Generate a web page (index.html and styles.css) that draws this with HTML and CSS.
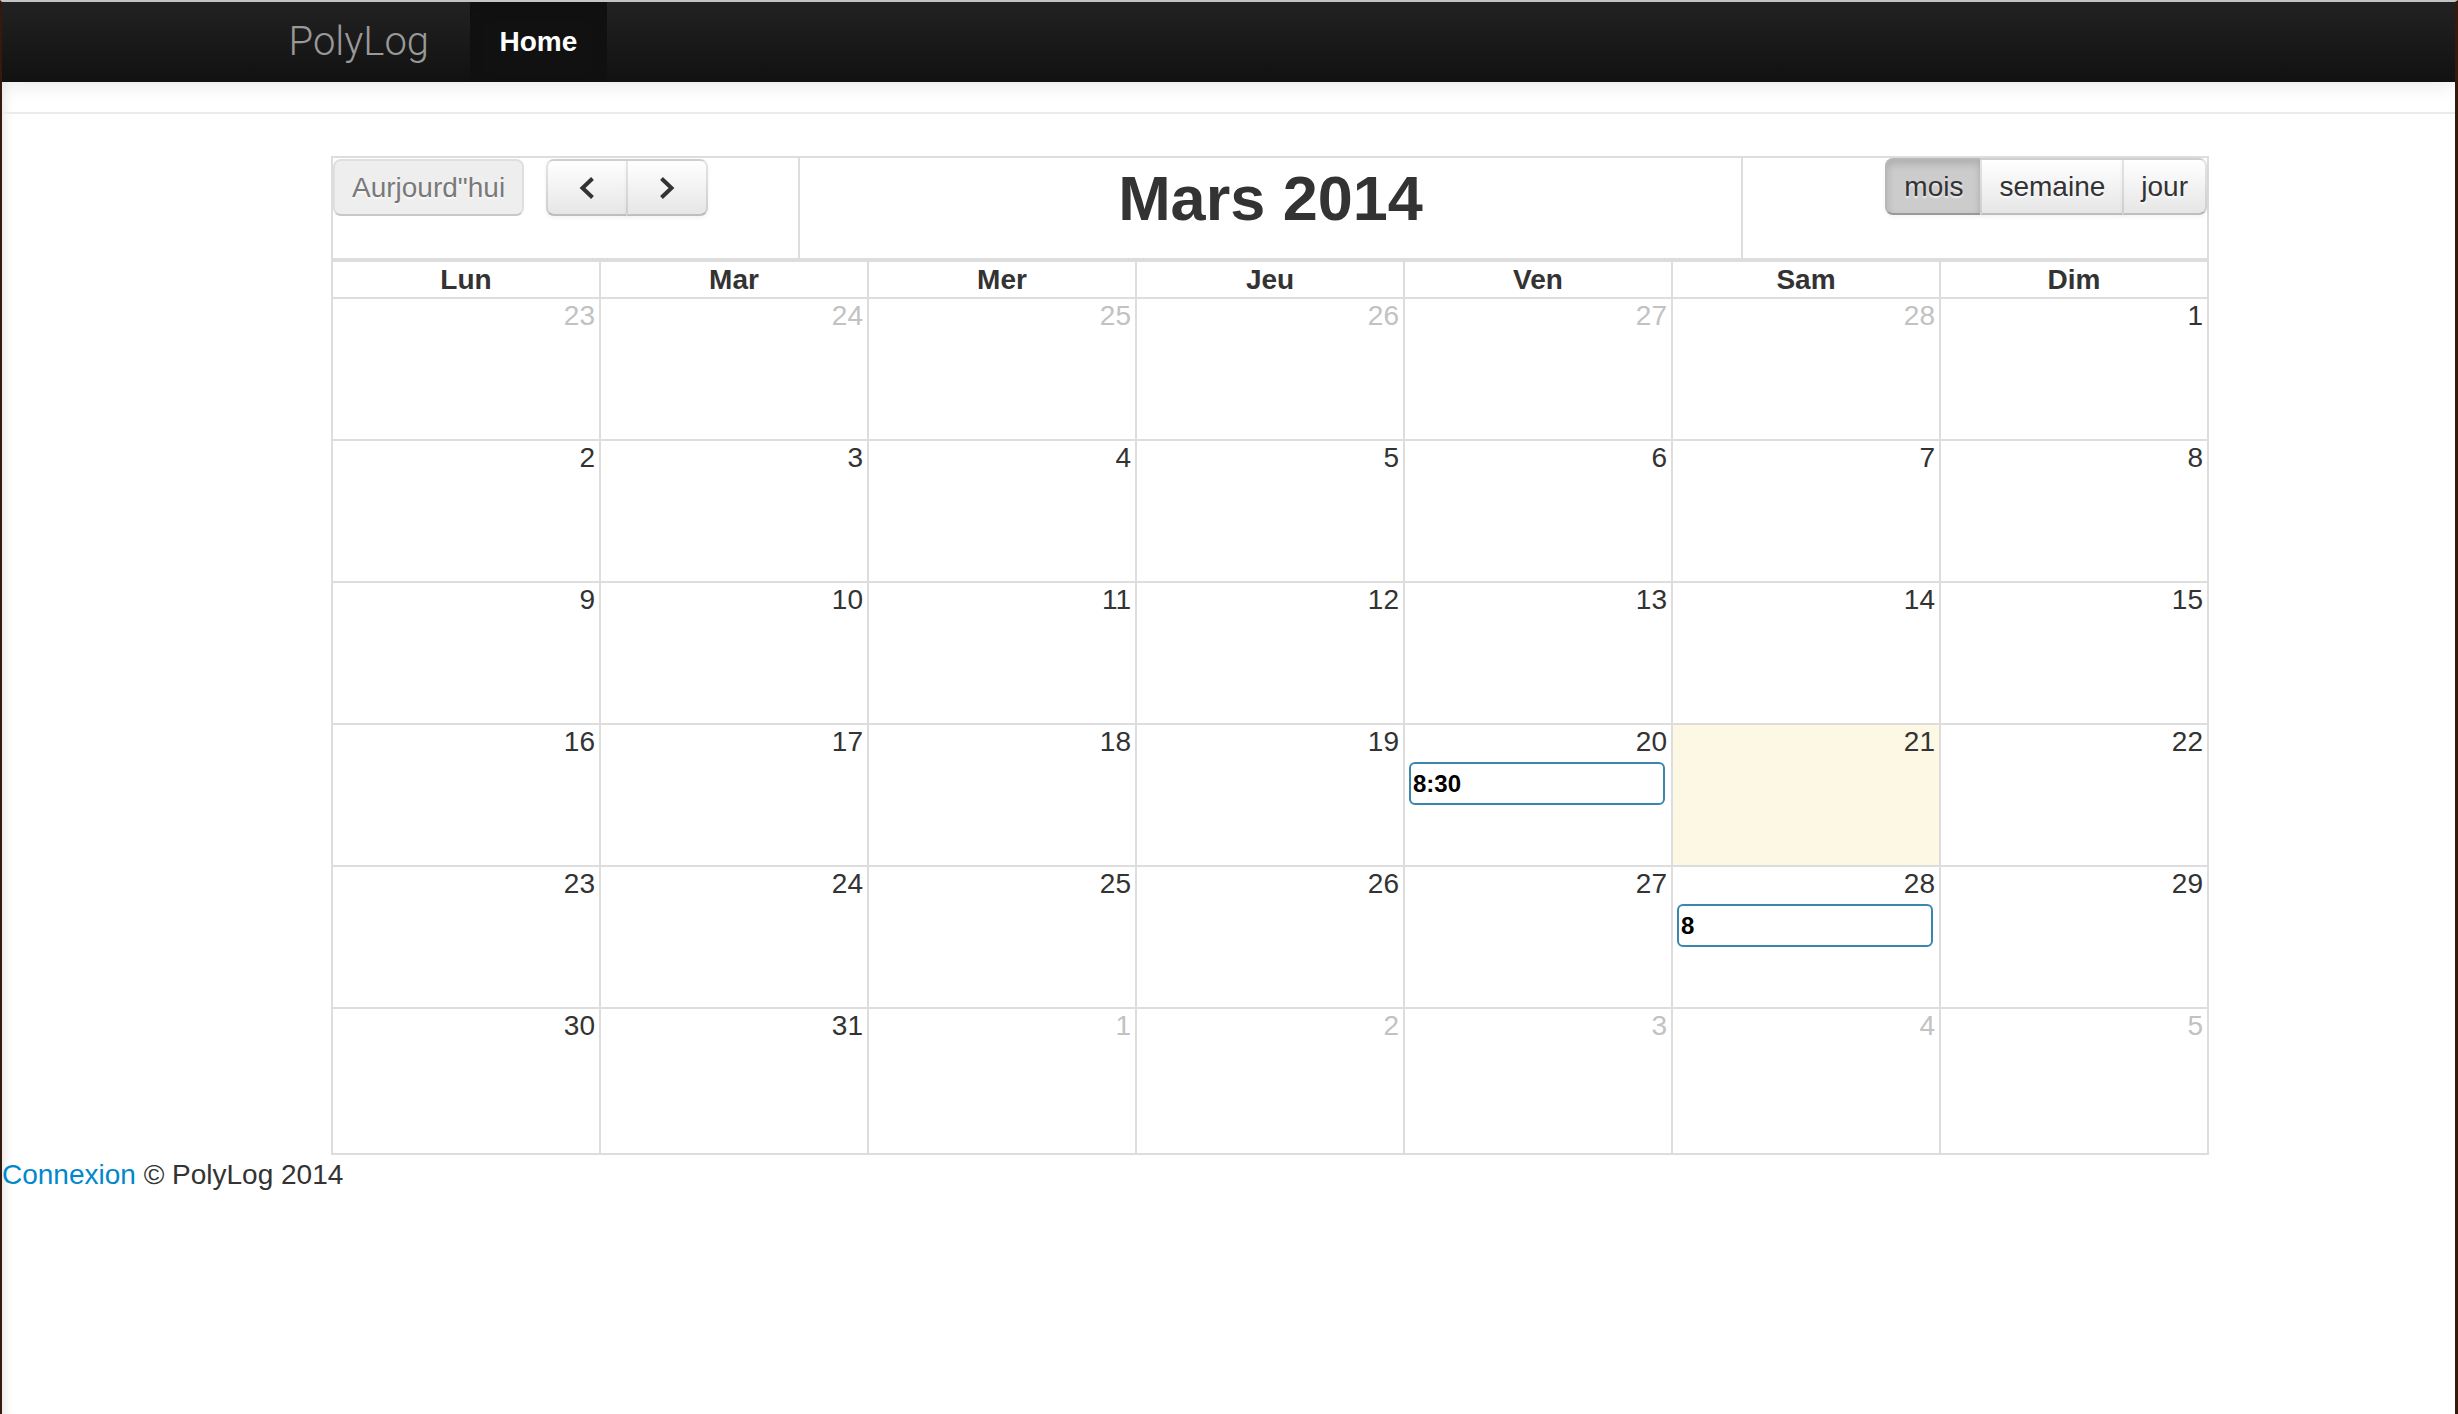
FILE: index.html
```html
<!DOCTYPE html>
<html lang="fr">
<head>
<meta charset="utf-8">
<title>PolyLog</title>
<link rel="stylesheet" href="styles.css">
</head>
<body>
<div class="window">
  <header class="navbar">
    <div class="nav-container">
      <a class="brand" href="#">PolyLog</a>
      <ul class="nav">
        <li class="active"><a href="#">Home</a></li>
      </ul>
    </div>
  </header>
  <div class="sep"></div>
  <main class="page">
    <div class="calendar">
      <div class="fc-header">
        <div class="fc-header-left">
          <span class="fc-button fc-state-disabled fc-corner-left fc-corner-right">Aurjourd"hui</span>
          <span class="fc-button fc-prev fc-corner-left"><svg class="chev" width="18" height="22" viewBox="0 0 18 22"><polyline points="14.5,1.5 4.5,11 14.5,20.5" fill="none" stroke="#333" stroke-width="4"/></svg></span><span class="fc-button fc-corner-right"><svg class="chev" width="18" height="22" viewBox="0 0 18 22"><polyline points="3.5,1.5 13.5,11 3.5,20.5" fill="none" stroke="#333" stroke-width="4"/></svg></span>
        </div>
        <div class="fc-header-center"><h2>Mars 2014</h2></div>
        <div class="fc-header-right">
          <span class="fc-button fc-state-active fc-corner-left">mois</span><span class="fc-button">semaine</span><span class="fc-button fc-corner-right">jour</span>
        </div>
      </div>
      <div class="fc-grid">
        <div class="fc-th">Lun</div>
        <div class="fc-th">Mar</div>
        <div class="fc-th">Mer</div>
        <div class="fc-th">Jeu</div>
        <div class="fc-th">Ven</div>
        <div class="fc-th">Sam</div>
        <div class="fc-th">Dim</div>

        <div class="fc-day fc-other"><div class="num">23</div></div>
        <div class="fc-day fc-other"><div class="num">24</div></div>
        <div class="fc-day fc-other"><div class="num">25</div></div>
        <div class="fc-day fc-other"><div class="num">26</div></div>
        <div class="fc-day fc-other"><div class="num">27</div></div>
        <div class="fc-day fc-other"><div class="num">28</div></div>
        <div class="fc-day"><div class="num">1</div></div>

        <div class="fc-day"><div class="num">2</div></div>
        <div class="fc-day"><div class="num">3</div></div>
        <div class="fc-day"><div class="num">4</div></div>
        <div class="fc-day"><div class="num">5</div></div>
        <div class="fc-day"><div class="num">6</div></div>
        <div class="fc-day"><div class="num">7</div></div>
        <div class="fc-day"><div class="num">8</div></div>

        <div class="fc-day"><div class="num">9</div></div>
        <div class="fc-day"><div class="num">10</div></div>
        <div class="fc-day"><div class="num">11</div></div>
        <div class="fc-day"><div class="num">12</div></div>
        <div class="fc-day"><div class="num">13</div></div>
        <div class="fc-day"><div class="num">14</div></div>
        <div class="fc-day"><div class="num">15</div></div>

        <div class="fc-day"><div class="num">16</div></div>
        <div class="fc-day"><div class="num">17</div></div>
        <div class="fc-day"><div class="num">18</div></div>
        <div class="fc-day"><div class="num">19</div></div>
        <div class="fc-day"><div class="num">20</div><div class="fc-event">8:30</div></div>
        <div class="fc-day fc-today"><div class="num">21</div></div>
        <div class="fc-day"><div class="num">22</div></div>

        <div class="fc-day"><div class="num">23</div></div>
        <div class="fc-day"><div class="num">24</div></div>
        <div class="fc-day"><div class="num">25</div></div>
        <div class="fc-day"><div class="num">26</div></div>
        <div class="fc-day"><div class="num">27</div></div>
        <div class="fc-day"><div class="num">28</div><div class="fc-event">8</div></div>
        <div class="fc-day"><div class="num">29</div></div>

        <div class="fc-day"><div class="num">30</div></div>
        <div class="fc-day"><div class="num">31</div></div>
        <div class="fc-day fc-other"><div class="num">1</div></div>
        <div class="fc-day fc-other"><div class="num">2</div></div>
        <div class="fc-day fc-other"><div class="num">3</div></div>
        <div class="fc-day fc-other"><div class="num">4</div></div>
        <div class="fc-day fc-other"><div class="num">5</div></div>
      </div>
    </div>
  </main>
  <footer class="footer"><a href="#">Connexion</a> © PolyLog 2014</footer>
</div>
</body>
</html>
```

FILE: styles.css
```css
* { box-sizing: border-box; }

html, body {
  margin: 0;
  padding: 0;
}

body {
  background: #2c150b;
  font-family: "Liberation Sans", Arial, sans-serif;
  font-size: 28px;
  line-height: 40px;
  color: #333;
}

.window {
  height: 1414px;
  border-top: 2px solid #c4c4c4;
  border-left: 2px solid #35190d;
  border-right: 3px solid #35190d;
  background: #fff;
  box-shadow: inset 12px 0 14px -12px rgba(0, 0, 0, 0.14);
  overflow: hidden;
}

/* navbar */
.navbar {
  height: 80px;
  background: linear-gradient(#222222, #111111);
  position: relative;
  z-index: 1;
  box-shadow: 0 2px 20px rgba(0, 0, 0, 0.1);
}

.nav-container {
  width: 1880px;
  margin: 0 auto;
  display: flex;
  height: 80px;
}

.brand {
  display: block;
  width: 181px;
  flex: none;
  font-family: Roboto, "Liberation Sans", sans-serif;
  font-weight: 300;
  font-size: 40px;
  line-height: 80px;
  color: #999;
  text-decoration: none;
}

.nav {
  list-style: none;
  margin: 0;
  padding: 0;
  display: flex;
}

.nav a {
  display: block;
  padding: 0 30px;
  line-height: 80px;
  color: #fff;
  font-weight: bold;
  text-decoration: none;
}

.nav .active a {
  background: #111;
  box-shadow: inset 0 6px 16px rgba(0, 0, 0, 0.125);
}

.sep {
  margin-top: 30px;
  height: 2px;
  background: #ebebeb;
}

/* page */
.page {
  width: 1880px;
  margin: 42px auto 0;
}

.calendar {
  margin-left: 42.5px;
  width: 1878px;
}

/* calendar header */
.fc-header {
  display: flex;
  height: 104px;
  border: 2px solid #ddd;
}

.fc-header-left {
  width: 467px;
  flex: none;
  border-right: 2px solid #ddd;
  display: flex;
  align-items: flex-start;
  padding-top: 1px;
}

.fc-header-center {
  flex: 1;
  border-right: 2px solid #ddd;
  text-align: center;
}

.fc-header-right {
  width: 464px;
  flex: none;
  display: flex;
  justify-content: flex-end;
  align-items: flex-start;
  padding-top: 0;
}

.fc-header-center h2 {
  margin: 0;
  font-size: 63px;
  line-height: 80px;
  font-weight: bold;
  color: #333;
}

.fc-button {
  display: inline-flex;
  align-items: center;
  justify-content: center;
  height: 57px;
  padding: 0 17px;
  margin-right: -2px;
  border: 2px solid;
  border-color: rgba(0, 0, 0, 0.1) rgba(0, 0, 0, 0.1) rgba(0, 0, 0, 0.25);
  background-color: #f5f5f5;
  background-image: linear-gradient(#ffffff, #e6e6e6);
  color: #333;
  text-shadow: 0 2px 2px rgba(255, 255, 255, 0.75);
  box-shadow: inset 0 2px 0 rgba(255, 255, 255, 0.2), 0 2px 4px rgba(0, 0, 0, 0.05);
  font-size: 28px;
  line-height: 1;
  white-space: nowrap;
}

.fc-corner-left {
  border-top-left-radius: 8px;
  border-bottom-left-radius: 8px;
}

.fc-corner-right {
  border-top-right-radius: 8px;
  border-bottom-right-radius: 8px;
  margin-right: 0;
}

.fc-prev {
  margin-left: 22px;
  padding: 0 30px;
}

.fc-prev + .fc-button {
  padding: 0 30px;
}

.chev {
  display: block;
}

.fc-state-disabled {
  background-color: #e6e6e6;
  background-image: none;
  opacity: 0.65;
  box-shadow: none;
}

.fc-state-active {
  background-color: #cccccc;
  background-image: none;
  box-shadow: inset 0 4px 8px rgba(0, 0, 0, 0.15), 0 2px 4px rgba(0, 0, 0, 0.05);
}

/* grid */
.fc-grid {
  display: grid;
  grid-template-columns: repeat(7, 268px);
  grid-template-rows: 37px repeat(5, 142px) 146px;
  border-left: 2px solid #ddd;
  border-top: 2px solid #ddd;
}

.fc-th,
.fc-day {
  border-right: 2px solid #ddd;
  border-bottom: 2px solid #ddd;
}

.fc-th {
  text-align: center;
  font-weight: bold;
  line-height: 35px;
}

.fc-day .num {
  text-align: right;
  padding-right: 4px;
  line-height: 33px;
  height: 33px;
}

.fc-other .num {
  color: #c2c2c2;
}

.fc-today {
  background: #fcf8e3;
}

.fc-event {
  margin: 4px 6px 0 4px;
  height: 43px;
  border: 2px solid #3a87ad;
  border-radius: 6px;
  background: #fff;
  color: #000;
  font-size: 24px;
  font-weight: bold;
  padding-left: 2px;
  display: flex;
  align-items: center;
}

/* footer */
.footer {
  line-height: 40px;
}

.footer a {
  color: #0088cc;
  text-decoration: none;
}
```
